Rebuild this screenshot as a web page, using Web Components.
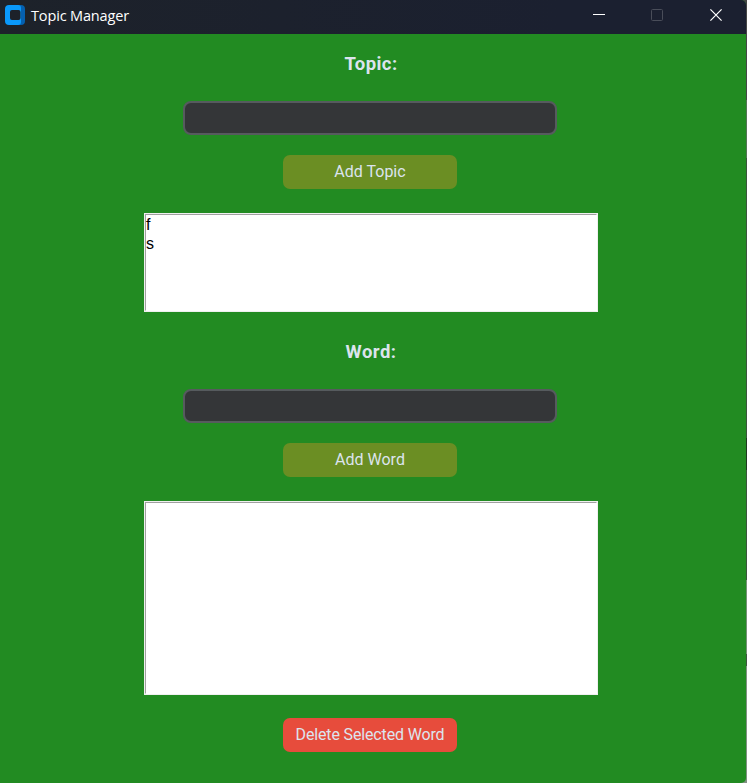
<!DOCTYPE html>
<html lang="en">
<head>
<meta charset="utf-8">
<title>Topic Manager</title>
<style>
html, body { margin: 0; height: 100%; overflow: hidden; }
</style>
</head>
<body>
<topic-app></topic-app>
<script>
const define = (name, html) => {
  const template = document.createElement('template');
  template.innerHTML = html;
  customElements.define(name, class extends HTMLElement {
    constructor() {
      super();
      this.attachShadow({ mode: 'open' }).append(template.content.cloneNode(true));
    }
  });
};

define('title-bar', `
<style>
:host { display: flex; height: 34px; box-sizing: border-box; padding-left: 5px; align-items: flex-start;
  background: linear-gradient(90deg, #1d222a, #1b2030 75%); color: #fff; font: 14.5px/20px "Open Sans", "Noto Sans", sans-serif; }
svg { display: block; flex: none; }
.logo { margin-top: 5px; }
.name { margin: 6px 0 0 6px; flex: 1; white-space: nowrap; letter-spacing: -.15px; }
.controls { display: flex; gap: 46px; margin: 9px 24px 0 0; }
.controls svg:last-child { margin-left: 1px; }
</style>
<svg class="logo" width="20" height="20" viewBox="0 0 20 20">
  <path d="M13 0h3a4 4 0 0 1 4 4v12a4 4 0 0 1-4 4h-3z" fill="#0560b0"/>
  <path d="M4 0h9q3 0 3 3v14q0 3-3 3H4a4 4 0 0 1-4-4V4a4 4 0 0 1 4-4z" fill="#0a99fb"/>
  <rect x="5" y="5" width="10.5" height="10" rx="2" fill="#1d222a"/>
</svg>
<div class="name"><slot></slot></div>
<div class="controls">
  <svg width="12" height="12"><path d="M0 5.5h12" stroke="#fff"/></svg>
  <svg width="12" height="12"><rect x=".5" y=".5" width="11" height="11" rx="1" fill="none" stroke="#494d59"/></svg>
  <svg width="12" height="12"><path d="M.4.4l11.2 11.2M11.6.4L.4 11.6" stroke="#fff" stroke-width="1.2"/></svg>
</div>`);

define('field-label', `
<style>
:host { display: block; height: 34px; color: #dce4ee; font: bold 18.5px/34px Roboto, sans-serif; letter-spacing: .45px; }
</style><slot></slot>`);

define('text-entry', `
<style>
:host { display: block; box-sizing: border-box; width: 374px; height: 34px; border: 2px solid #565b5e; border-radius: 8px; background: #343638; }
</style>`);

define('action-button', `
<style>
:host { display: block; width: 174px; height: 34px; border-radius: 7px; background: var(--fill, #6b8e23);
  color: #dce4ee; font: 16px/33px Roboto, sans-serif; text-align: center; white-space: nowrap; }
</style><slot></slot>`);

define('list-box', `
<style>
:host { display: block; box-sizing: border-box; width: 454px; background: #fff; border: 1px solid #f0f0f0; }
div { box-sizing: border-box; height: 100%; border: 1px solid; border-color: #a0a0a0 #fff #fff #a0a0a0;
  color: #000; font: 16px/19px "Liberation Sans", Arial, sans-serif; }
</style><div><slot></slot></div>`);

define('list-item', `<style>:host { display: block; height: 19px; }</style><slot></slot>`);

define('topic-form', `
<style>
:host { display: flex; flex-direction: column; align-items: center; }
::slotted(field-label) { margin-bottom: 20px; }
::slotted(text-entry) { margin-bottom: 20px; }
::slotted(action-button) { margin-bottom: 24px; }
</style><slot></slot>`);

define('topic-app', `
<style>
:host { display: flex; width: 747px; height: 783px;
  background: linear-gradient(#464646 0 100px, #557455 100px 158px, #3b553b 158px 438px, #203820 438px 470px, #3b553b 470px 580px, #759075 580px 654px, #405540 654px 666px, #829082 666px); }
main { width: 746px; height: 783px; overflow: hidden; background: #228b22; border-radius: 0 5px 5px 0; }
.body { display: flex; flex-direction: column; align-items: center; padding: 13px 6px 0 0; }
topic-form + topic-form { margin-top: 23px; }
.topics { height: 99px; }
.words { height: 194px; }
.topics, .words { margin-left: 2px; }
.label { margin-left: 2px; }
.delete { --fill: #e74c3c; margin-top: 23px; letter-spacing: -.15px; }
</style>
<main>
  <title-bar>Topic Manager</title-bar>
  <div class="body">
    <topic-form>
      <field-label class="label">Topic:</field-label>
      <text-entry></text-entry>
      <action-button>Add Topic</action-button>
      <list-box class="topics"><list-item>f</list-item><list-item>s</list-item></list-box>
    </topic-form>
    <topic-form>
      <field-label class="label">Word:</field-label>
      <text-entry></text-entry>
      <action-button>Add Word</action-button>
      <list-box class="words"></list-box>
    </topic-form>
    <action-button class="delete">Delete Selected Word</action-button>
  </div>
</main>`);
</script>
</body>
</html>
